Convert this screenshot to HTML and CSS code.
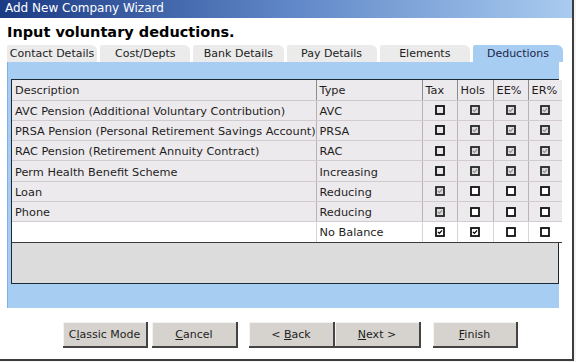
FILE: index.html
```html
<!DOCTYPE html>
<html lang="en">

<head>
    <meta charset="UTF-8">
    <title>Add New Company Wizard</title>
    <link rel="stylesheet" href="styles.css">
</head>

<body>
    <svg class="defs" width="0" height="0">
        <symbol id="cb-off-dis" viewBox="0 0 10 10">
            <rect x="1" y="1" width="8" height="8" fill="#e9e6e9" stroke="#111" stroke-width="1.8"/>
        </symbol>
        <symbol id="cb-on-dis" viewBox="0 0 10 10">
            <rect x="1" y="1" width="8" height="8" fill="#dcdcdc" stroke="#262626" stroke-width="1.8"/>
            <path d="M2.9 4.9 L4.4 6.4 L7.1 3.4" fill="none" stroke="#8e8e8e" stroke-width="1.1"/>
        </symbol>
        <symbol id="cb-off" viewBox="0 0 10 10">
            <rect x="1" y="1" width="8" height="8" fill="#fff" stroke="#111" stroke-width="1.8"/>
        </symbol>
        <symbol id="cb-on" viewBox="0 0 10 10">
            <rect x="1" y="1" width="8" height="8" fill="#fff" stroke="#111" stroke-width="1.8"/>
            <path d="M2.9 4.9 L4.4 6.4 L7.1 3.4" fill="none" stroke="#000" stroke-width="1.3"/>
        </symbol>
    </svg>

    <div class="window">
        <div class="titlebar">Add New Company Wizard</div>
        <h1 class="heading">Input voluntary deductions.</h1>

        <div class="tabs">
            <div class="tab">Contact Details</div>
            <div class="tab">Cost/Depts</div>
            <div class="tab">Bank Details</div>
            <div class="tab">Pay Details</div>
            <div class="tab">Elements</div>
            <div class="tab active">Deductions</div>
        </div>

        <div class="panel">
            <div class="grid-box">
                <table class="grid">
                    <colgroup>
                        <col class="c-desc">
                        <col class="c-type">
                        <col class="c-tax">
                        <col class="c-hols">
                        <col class="c-ee">
                        <col class="c-er">
                    </colgroup>
                    <tr class="head">
                        <td>Description</td><td>Type</td><td>Tax</td><td>Hols</td><td>EE%</td><td>ER%</td>
                    </tr>
                    <tr>
                        <td>AVC Pension (Additional Voluntary Contribution)</td><td>AVC</td>
                        <td class="chk"><svg class="cb"><use href="#cb-off-dis"/></svg></td>
                        <td class="chk"><svg class="cb"><use href="#cb-on-dis"/></svg></td>
                        <td class="chk"><svg class="cb"><use href="#cb-on-dis"/></svg></td>
                        <td class="chk"><svg class="cb"><use href="#cb-on-dis"/></svg></td>
                    </tr>
                    <tr>
                        <td>PRSA Pension (Personal Retirement Savings Account)</td><td>PRSA</td>
                        <td class="chk"><svg class="cb"><use href="#cb-off-dis"/></svg></td>
                        <td class="chk"><svg class="cb"><use href="#cb-on-dis"/></svg></td>
                        <td class="chk"><svg class="cb"><use href="#cb-on-dis"/></svg></td>
                        <td class="chk"><svg class="cb"><use href="#cb-on-dis"/></svg></td>
                    </tr>
                    <tr>
                        <td>RAC Pension (Retirement Annuity Contract)</td><td>RAC</td>
                        <td class="chk"><svg class="cb"><use href="#cb-off-dis"/></svg></td>
                        <td class="chk"><svg class="cb"><use href="#cb-on-dis"/></svg></td>
                        <td class="chk"><svg class="cb"><use href="#cb-on-dis"/></svg></td>
                        <td class="chk"><svg class="cb"><use href="#cb-on-dis"/></svg></td>
                    </tr>
                    <tr>
                        <td>Perm Health Benefit Scheme</td><td>Increasing</td>
                        <td class="chk"><svg class="cb"><use href="#cb-off-dis"/></svg></td>
                        <td class="chk"><svg class="cb"><use href="#cb-on-dis"/></svg></td>
                        <td class="chk"><svg class="cb"><use href="#cb-on-dis"/></svg></td>
                        <td class="chk"><svg class="cb"><use href="#cb-on-dis"/></svg></td>
                    </tr>
                    <tr>
                        <td>Loan</td><td>Reducing</td>
                        <td class="chk"><svg class="cb"><use href="#cb-on-dis"/></svg></td>
                        <td class="chk"><svg class="cb"><use href="#cb-off"/></svg></td>
                        <td class="chk"><svg class="cb"><use href="#cb-off"/></svg></td>
                        <td class="chk"><svg class="cb"><use href="#cb-off"/></svg></td>
                    </tr>
                    <tr>
                        <td>Phone</td><td>Reducing</td>
                        <td class="chk"><svg class="cb"><use href="#cb-on-dis"/></svg></td>
                        <td class="chk"><svg class="cb"><use href="#cb-off"/></svg></td>
                        <td class="chk"><svg class="cb"><use href="#cb-off"/></svg></td>
                        <td class="chk"><svg class="cb"><use href="#cb-off"/></svg></td>
                    </tr>
                    <tr class="new">
                        <td></td><td>No Balance</td>
                        <td class="chk"><svg class="cb"><use href="#cb-on"/></svg></td>
                        <td class="chk"><svg class="cb"><use href="#cb-on"/></svg></td>
                        <td class="chk"><svg class="cb"><use href="#cb-off"/></svg></td>
                        <td class="chk"><svg class="cb"><use href="#cb-off"/></svg></td>
                    </tr>
                </table>
            </div>
        </div>

        <div class="buttons">
            <button class="btn">C<u>l</u>assic Mode</button>
            <button class="btn btn-cancel"><u>C</u>ancel</button>
            <button class="btn btn-back">&lt; <u>B</u>ack</button>
            <button class="btn btn-next"><u>N</u>ext &gt;</button>
            <button class="btn btn-finish"><u>F</u>inish</button>
        </div>
    </div>
</body>

</html>
```

FILE: styles.css
```css
html,
body,
div,
h1,
table,
td,
button {
    padding: 0;
    margin: 0;
}

body {
    background-color: #f4f4f4;
    font-family: "DejaVu Sans", Verdana, sans-serif;
    font-size: 11px;
    color: #1e1e1e;
}

.defs {
    position: absolute;
    width: 0;
    height: 0;
}

.window {
    width: 572px;
    height: 359px;
    background-color: #fff;
    border-right: 2px solid #3c3c3c;
    border-bottom: 2px solid #3c3c3c;
    display: flex;
    flex-direction: column;
}

.titlebar {
    height: 18px;
    line-height: 17px;
    padding-left: 5px;
    font-size: 12px;
    color: #fff;
    background: linear-gradient(to right, #1b3a84, #5f86c6 50%, #a9cbf0);
}

.heading {
    margin: 6px 0 0 7px;
    font-size: 14.5px;
    line-height: 17px;
    font-weight: bold;
    color: #000;
}

/* tab strip */
.tabs {
    display: flex;
    gap: 3px;
    margin: 4px 0 0 7px;
    width: 556px;
    height: 17px;
}

.tab {
    flex: 1;
    line-height: 17px;
    text-align: center;
    background-color: #ebebeb;
    border-radius: 2px 6px 0 0;
    color: #222;
}

.tab.active {
    background-color: #a8cdf3;
    color: #1c2848;
}

/* blue page */
.panel {
    width: 552px;
    margin-left: 7px;
    height: 246px;
    box-sizing: border-box;
    padding: 17px 0 0 3px;
    background-color: #a8cdf3;
    border-left: 1px solid #7fb1e8;
}

.grid-box {
    height: 205px;
    box-sizing: border-box;
    border: 1px solid #1c2a36;
    background-color: #dcdcdc;
}

.grid {
    width: 550px;
    table-layout: fixed;
    border-collapse: collapse;
    font-size: 11.3px;
}

.c-desc { width: 304px; }
.c-type { width: 106px; }
.c-tax { width: 35px; }
.c-hols { width: 36px; }
.c-ee { width: 35px; }
.c-er { width: 34px; }

.grid td {
    height: 20.3px;
    box-sizing: border-box;
    padding: 2px 0 0 3px;
    line-height: 17px;
    white-space: nowrap;
    overflow: hidden;
    background-color: #edeaed;
    border-bottom: 1px solid #d2cbd2;
    border-left: 1px solid #b9b2b9;
}

.grid td:first-child {
    border-left: none;
}

.grid .head td {
    height: 20px;
    border-left-color: #8c8c8c;
    border-bottom-color: #cdc7cd;
}

.grid .new td {
    background-color: #fff;
    border-bottom: 1px solid #3a3a3a;
    border-left-color: #d6d6d6;
}

.grid td.chk {
    padding: 0;
    text-align: center;
    line-height: 10px;
}

.cb {
    width: 10px;
    height: 10px;
    display: inline-block;
    vertical-align: middle;
}

/* bottom buttons */
.buttons {
    display: flex;
    margin: 14px 0 0 63px;
}

.btn {
    width: 85px;
    height: 26px;
    font-family: "DejaVu Sans", Verdana, sans-serif;
    font-size: 11px;
    color: #1e1e1e;
    background-color: #d6d3ce;
    border: none;
    border-right: 2px solid #444;
    border-bottom: 2px solid #444;
    box-shadow: inset 1px 1px 0 #f4f3f1;
}

.btn-cancel {
    width: 86px;
    margin-left: 4px;
}

.btn-back {
    width: 86px;
    margin-left: 11px;
}

.btn-next {
    width: 86px;
}

.btn-finish {
    margin-left: 12px;
}
```
